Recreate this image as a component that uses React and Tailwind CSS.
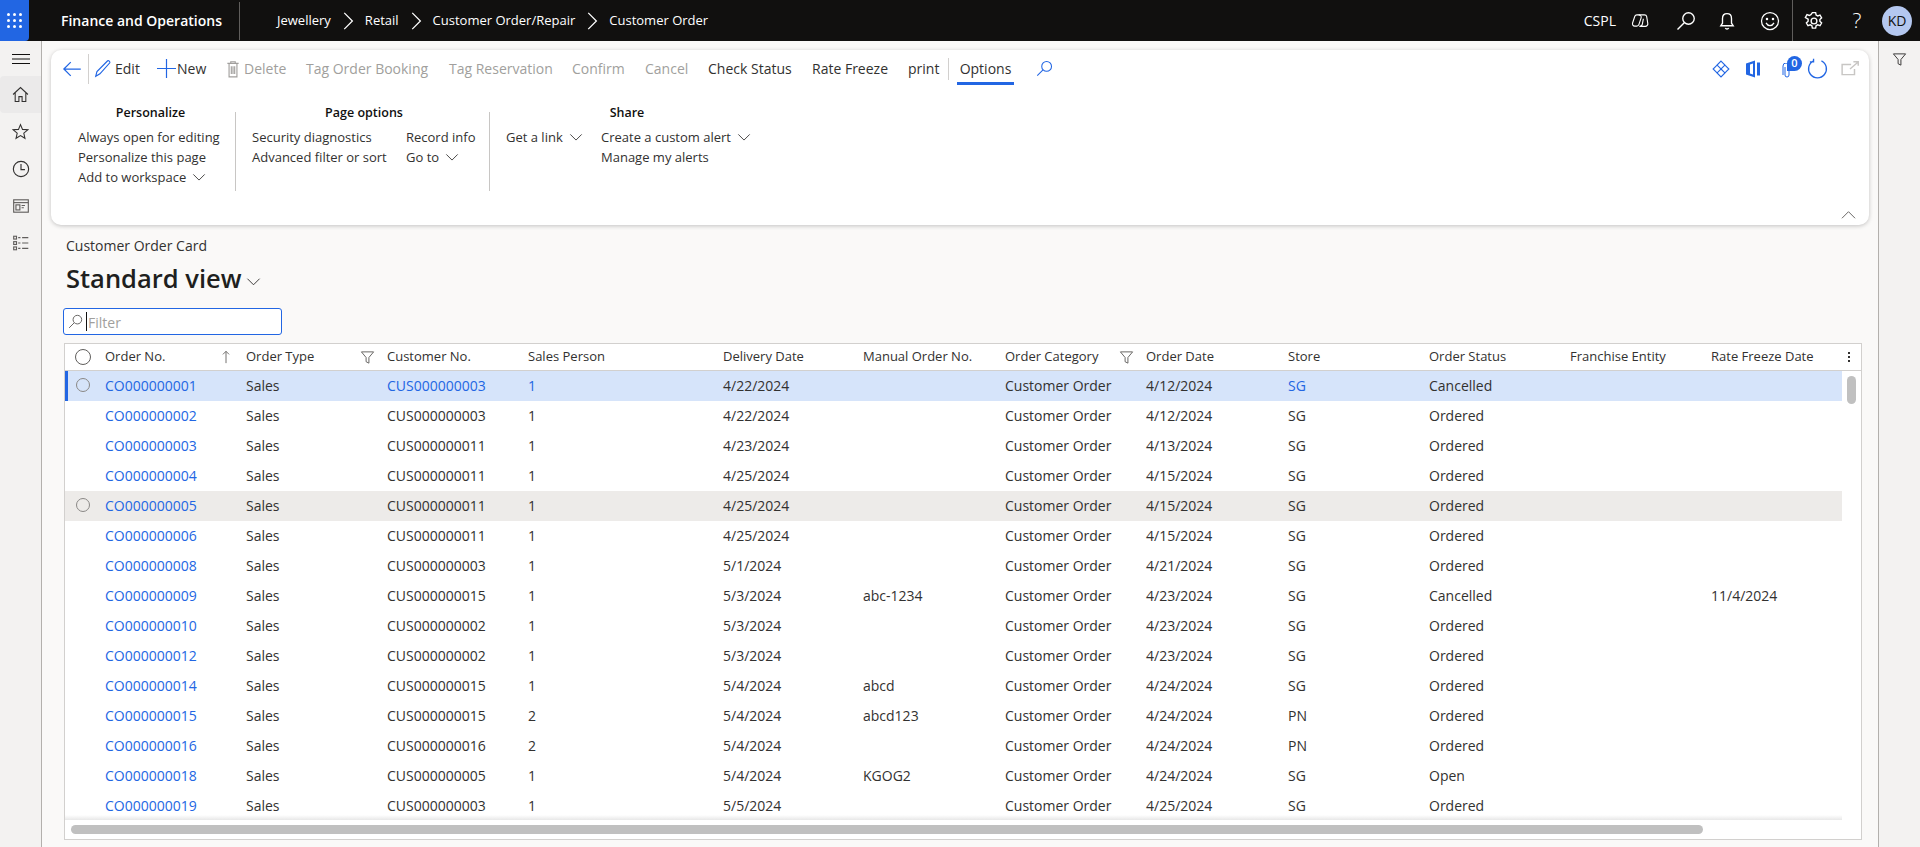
import React from 'react';

const navItems = ['Jewellery', 'Retail', 'Customer Order/Repair', 'Customer Order'];

const actions = [
  { label: 'Tag Order Booking', width: 'w-[143px]', muted: true },
  { label: 'Tag Reservation', width: 'w-[123px]', muted: true },
  { label: 'Confirm', width: 'w-[73px]', muted: true },
  { label: 'Cancel', width: 'w-[63px]', muted: true },
  { label: 'Check Status', width: 'w-[104px]' },
  { label: 'Rate Freeze', width: 'w-[96px]' },
  { label: 'print', width: 'w-[40px]' },
];

const columns = [
  { label: 'Order No.', width: 'w-[141px]', key: 'order' },
  { label: 'Order Type', width: 'w-[141px]', key: 'type' },
  { label: 'Customer No.', width: 'w-[141px]', key: 'customer' },
  { label: 'Sales Person', width: 'w-[195px]', key: 'person' },
  { label: 'Delivery Date', width: 'w-[140px]', key: 'delivery' },
  { label: 'Manual Order No.', width: 'w-[142px]', key: 'manual' },
  { label: 'Order Category', width: 'w-[141px]', key: 'category' },
  { label: 'Order Date', width: 'w-[142px]', key: 'date' },
  { label: 'Store', width: 'w-[141px]', key: 'store' },
  { label: 'Order Status', width: 'w-[141px]', key: 'status' },
  { label: 'Franchise Entity', width: 'w-[141px]', key: 'franchise' },
  { label: 'Rate Freeze Date', width: 'w-[131px]', key: 'freeze' },
];

const row = (order, customer, person, delivery, manual, date, store, status, freeze = '') => ({
  order, type: 'Sales', customer, person, delivery, manual,
  category: 'Customer Order', date, store, status, franchise: '', freeze,
});

const rows = [
  row('CO000000001', 'CUS000000003', '1', '4/22/2024', '', '4/12/2024', 'SG', 'Cancelled'),
  row('CO000000002', 'CUS000000003', '1', '4/22/2024', '', '4/12/2024', 'SG', 'Ordered'),
  row('CO000000003', 'CUS000000011', '1', '4/23/2024', '', '4/13/2024', 'SG', 'Ordered'),
  row('CO000000004', 'CUS000000011', '1', '4/25/2024', '', '4/15/2024', 'SG', 'Ordered'),
  row('CO000000005', 'CUS000000011', '1', '4/25/2024', '', '4/15/2024', 'SG', 'Ordered'),
  row('CO000000006', 'CUS000000011', '1', '4/25/2024', '', '4/15/2024', 'SG', 'Ordered'),
  row('CO000000008', 'CUS000000003', '1', '5/1/2024', '', '4/21/2024', 'SG', 'Ordered'),
  row('CO000000009', 'CUS000000015', '1', '5/3/2024', 'abc-1234', '4/23/2024', 'SG', 'Cancelled', '11/4/2024'),
  row('CO000000010', 'CUS000000002', '1', '5/3/2024', '', '4/23/2024', 'SG', 'Ordered'),
  row('CO000000012', 'CUS000000002', '1', '5/3/2024', '', '4/23/2024', 'SG', 'Ordered'),
  row('CO000000014', 'CUS000000015', '1', '5/4/2024', 'abcd', '4/24/2024', 'SG', 'Ordered'),
  row('CO000000015', 'CUS000000015', '2', '5/4/2024', 'abcd123', '4/24/2024', 'PN', 'Ordered'),
  row('CO000000016', 'CUS000000016', '2', '5/4/2024', '', '4/24/2024', 'PN', 'Ordered'),
  row('CO000000018', 'CUS000000005', '1', '5/4/2024', 'KGOG2', '4/24/2024', 'SG', 'Open'),
  row('CO000000019', 'CUS000000003', '1', '5/5/2024', '', '4/25/2024', 'SG', 'Ordered'),
];

const Icon = ({ size = 16, className = '', children, width = 1 }) => (
  <svg width={size} height={size} viewBox="0 0 16 16" fill="none" stroke="currentColor" strokeWidth={width} className={`shrink-0 ${className}`}>
    {children}
  </svg>
);

const Chevron = ({ className = 'text-[#323130]', size = 14 }) => (
  <Icon size={size} className={className}><path d="M1.500 5l6.500 6.500L14.500 5" /></Icon>
);

const Search = ({ size = 16, className = '', width = 1 }) => (
  <Icon size={size} className={className} width={width}>
    <circle cx="10" cy="6" r="4.600" />
    <path d="M6.600 9.400L1.200 14.800" />
  </Icon>
);

const Funnel = ({ className = 'text-[#605e5c]', size = 15 }) => (
  <Icon size={size} className={className}><path d="M1.500 2h13L9.500 8v6l-3-1.500V8z" /></Icon>
);

const MenuLink = ({ children, chevron }) => (
  <div className="flex h-5 items-center gap-[6px] whitespace-nowrap">
    {children}
    {chevron && <Chevron className="mt-[-3px] text-[#323130]" />}
  </div>
);

const SideButton = ({ children, active }) => (
  <div className={`flex h-[37px] w-full items-center justify-center rounded-l text-[#323130] ${active ? 'bg-[#ebeaea]' : ''}`}>
    {children}
  </div>
);

const TopBar = () => (
  <header className="flex h-[41px] shrink-0 items-center bg-[#11100f] text-white">
    <div className="flex h-full w-[29px] items-center justify-center rounded-br bg-[#2266e3]">
      <div className="grid grid-cols-3 gap-[3px]">
        {Array.from({ length: 9 }).map((_, i) => (
          <span key={i} className="h-[3px] w-[3px] rounded-full bg-white" />
        ))}
      </div>
    </div>
    <div className="ml-[32px] w-[178px] whitespace-nowrap text-[14px] font-semibold">Finance and Operations</div>
    <div className="h-[38px] w-px bg-[#605e5c]" />
    <nav className="ml-[37px] flex items-center text-[13px]">
      {navItems.map((item, i) => (
        <React.Fragment key={item}>
          {i > 0 && (
            <Icon size={20} className="mx-[7px]"><path d="M5 1.500L11.500 8 5 14.500" /></Icon>
          )}
          <span className="whitespace-nowrap">{item}</span>
        </React.Fragment>
      ))}
    </nav>
    <div className="ml-auto flex h-full items-center">
      <span className="mr-[15px] text-[14px]">CSPL</span>
      <Icon size={18} className="mr-[27px]">
        <path d="M6.800 2.500H5.200C4.300 2.500 3.700 3 3.400 3.800L1.400 9.800C1 11.200 1.800 12.500 3.300 12.500H5.200C6 12.500 6.700 12 7 11.200L9 5.200C9.500 3.800 8.300 2.500 6.800 2.500z" />
        <path d="M6.800 2.500H12C13 2.500 13.700 3 13.900 3.900L14.900 10C15.200 11.400 14.200 12.800 12.700 12.800H7.400C8.700 12.800 9.800 12 10.100 10.800L11 6" />
      </Icon>
      <Search size={20} className="mr-[22px]" width={1.100} />
      <Icon size={18} className="mr-[24px]" width={1.200}>
        <path d="M8 1.500c-2.700 0-4 2-4 4.200V10L2.500 12.200h11L12 10V5.700c0-2.200-1.300-4.200-4-4.200z" />
        <path d="M6.500 14.200a1.700 1.700 0 003 0" />
      </Icon>
      <Icon size={20} className="mr-[12px]" width={1}>
        <circle cx="8" cy="8" r="6.800" />
        <circle cx="5.600" cy="6.300" r=".5" fill="currentColor" />
        <circle cx="10.400" cy="6.300" r=".5" fill="currentColor" />
        <path d="M4.800 9.500c.8 1.500 1.900 2.200 3.200 2.200s2.400-.7 3.200-2.200" />
      </Icon>
      <div className="h-full w-px bg-[#605e5c]" />
      <Icon size={20} className="ml-[11px]" width={1.100}>
        <circle cx="8" cy="8" r="2.300" />
        <path d="M6.700 1.300h2.600l.4 1.900 1.300.7 1.800-.7 1.300 2.300-1.400 1.300v1.400l1.400 1.300-1.300 2.300-1.800-.7-1.300.7-.4 1.900H6.700l-.4-1.900-1.300-.7-1.800.7-1.300-2.300 1.400-1.300V6.500L1.100 5.200l1.300-2.300 1.800.7 1.300-.7z" />
      </Icon>
      <span className="ml-[26px] w-[14px] text-center text-[21px] font-light">?</span>
      <div className="ml-[18px] mr-[8px] flex h-[30px] w-[30px] items-center justify-center rounded-full bg-[#b4c7ef] text-[14px] text-[#11100f]">KD</div>
    </div>
  </header>
);

const Sidebar = () => (
  <aside className="flex w-[42px] shrink-0 flex-col items-center border-r border-[#b3b0ad] bg-[#f3f2f1]">
    <div className="flex h-[35px] w-full items-center justify-center text-[#11100f]">
      <svg width="18" height="10" viewBox="0 0 18 10" stroke="currentColor" fill="none"><path d="M0 .5h18M0 5h18M0 9.500h18" /></svg>
    </div>
    <SideButton active>
      <Icon size={17}><path d="M1 8l7-6.500L15 8M3 6.500V14.500h3.500V10h3v4.500H13V6.500" /></Icon>
    </SideButton>
    <SideButton>
      <Icon size={17}><path d="M8 1.500l1.900 4.500 4.900.4-3.700 3.200 1.100 4.800L8 11.900l-4.200 2.500 1.100-4.800L1.200 6.400l4.900-.4z" /></Icon>
    </SideButton>
    <SideButton>
      <Icon size={18}><circle cx="8" cy="8" r="6.800" /><path d="M8 3.500V8.500h3.500" /></Icon>
    </SideButton>
    <SideButton>
      <Icon size={18} className="text-[#605e5c]">
        <rect x="1.500" y="2.500" width="13" height="11" />
        <path d="M1.500 5h13" />
        <rect x="3.500" y="7" width="3.500" height="4.500" />
        <path d="M8.500 7.500h3M8.500 9.500h2" />
      </Icon>
    </SideButton>
    <SideButton>
      <Icon size={18} className="text-[#605e5c]">
        <rect x="1.500" y="2" width="2.500" height="2.500" />
        <rect x="1.500" y="6.800" width="2.500" height="2.500" />
        <rect x="1.500" y="11.500" width="2.500" height="2.500" />
        <path d="M5.500 3.200h2M9 3.200h5.500M5.500 8h2M9 8h5.500M5.500 12.800h2M9 12.800h5.500" />
      </Icon>
    </SideButton>
  </aside>
);

const Ribbon = () => (
  <section className="ml-[-13px] mr-[-7px] mt-[9px] flex h-[175px] shrink-0 flex-col rounded-[10px] bg-white text-[13px] text-[#323130] shadow-[0_1px_4px_rgba(0,0,0,0.22)]">
    <div className="flex h-[36px] items-center pl-[11px] pt-[1px] text-[14px]">
      <Icon size={20} className="text-[#2266e3]"><path d="M15 8H1.500M7 2.500L1.500 8 7 13.500" /></Icon>
      <div className="ml-[6px] mr-[5px] h-[30px] w-px bg-[#d2d0ce]" />
      <Icon size={19} className="text-[#2266e3]"><path d="M1.500 14.500l1-4L11.500 1.500c.8-.6 2.200.7 1.800 1.700L5 12.500z" /></Icon>
      <span className="w-[44px] pl-[2px]">Edit</span>
      <Icon size={19} className="text-[#2266e3]"><path d="M8 0v16M0 8h16" /></Icon>
      <span className="w-[48px] pl-[1px]">New</span>
      <Icon size={18} className="text-[#a19f9d]">
        <path d="M4.500 3v12h7V3M3 3h10M6 3V1.500h4V3M6.500 5.500v7M8 5.500v7M9.500 5.500v7" />
      </Icon>
      <span className="w-[64px] whitespace-nowrap pl-[2px] text-[#a19f9d]">Delete</span>
      {actions.map((a) => (
        <span key={a.label} className={`whitespace-nowrap ${a.width} ${a.muted ? 'text-[#a19f9d]' : ''}`}>{a.label}</span>
      ))}
      <div className="h-[22px] w-px bg-[#d2d0ce]" />
      <div className="relative ml-[8px] flex h-[32px] w-[57px] items-center justify-center font-medium">
        Options
        <div className="absolute bottom-0 left-0 right-0 h-[3px] bg-[#2266e3]" />
      </div>
      <Search size={17} className="ml-[22px] text-[#2266e3]" />
      <div className="ml-auto flex items-center pr-[10px] text-[#2266e3]">
        <Icon size={18}>
          <path d="M8 1l3.500 3.500L8 8 4.500 4.500zM8 8l3.500 3.500L8 15l-3.500-3.500zM4.500 4.500L1 8l3.500 3.500M11.500 4.500L15 8l-3.500 3.500" />
        </Icon>
        <svg width="14" height="18" viewBox="0 0 14 18" className="ml-[16px]" fill="currentColor">
          <path d="M0 3.500L9 0.500v17L0 14.500zM11 2.500h3v13h-3z" />
          <path d="M4 4.500v9l3 1v-11z" fill="#fff" />
        </svg>
        <div className="relative ml-[22px] flex h-[18px] w-[12px] items-center justify-center">
          <Icon size={16} className="mt-[4px]"><path d="M5 4v8a2 2 0 004 0V3a3 3 0 00-6 0v9" /></Icon>
          <span className="absolute left-[5px] top-[-4px] flex h-[15px] w-[15px] items-center justify-center rounded-full rounded-bl-[3px] bg-[#2266e3] text-[11px] font-semibold text-white">0</span>
        </div>
        <Icon size={21} className="ml-[13px]"><path d="M5 2.200a6.800 6.800 0 106 0M5 .500v2.500H2.200" /></Icon>
        <Icon size={18} className="ml-[13px] text-[#c8c6c4]" width={1.300}>
          <path d="M9 4H1v9h11V8M8 8l7-6M11 1.500h4.300v3.500" />
        </Icon>
      </div>
    </div>
    <div className="flex pl-[27px] pt-[17px]">
      <div className="w-[157px] shrink-0">
        <div className="mb-[5px] pr-[12px] text-center text-[12.500px] font-semibold leading-5 text-[#11100f]">Personalize</div>
        <MenuLink>Always open for editing</MenuLink>
        <MenuLink>Personalize this page</MenuLink>
        <MenuLink chevron>Add to workspace</MenuLink>
      </div>
      <div className="mt-[9px] h-[79px] w-px shrink-0 self-start bg-[#c8c6c4]" />
      <div className="grid w-[253px] shrink-0 grid-cols-[154px_1fr] content-start pl-[16px]">
        <div className="col-span-2 mb-[5px] pr-[13px] text-center text-[12.500px] font-semibold leading-5 text-[#11100f]">Page options</div>
        <MenuLink>Security diagnostics</MenuLink>
        <MenuLink>Record info</MenuLink>
        <MenuLink>Advanced filter or sort</MenuLink>
        <MenuLink chevron>Go to</MenuLink>
      </div>
      <div className="mt-[9px] h-[79px] w-px shrink-0 self-start bg-[#c8c6c4]" />
      <div className="grid w-[280px] shrink-0 grid-cols-[95px_1fr] content-start pl-[16px]">
        <div className="col-span-2 mb-[5px] pr-[22px] text-center text-[12.500px] font-semibold leading-5 text-[#11100f]">Share</div>
        <MenuLink chevron>Get a link</MenuLink>
        <MenuLink chevron>Create a custom alert</MenuLink>
        <div />
        <MenuLink>Manage my alerts</MenuLink>
      </div>
    </div>
    <div className="mt-auto flex justify-end pb-[3px] pr-[13px]">
      <Icon size={15} className="text-[#605e5c]"><path d="M1 12l7-7 7 7" /></Icon>
    </div>
  </section>
);

const OrderGrid = () => (
  <div className="relative mt-[8px] border border-[#d2d0ce] bg-white text-[13px] text-[#323130]">
    <div className="flex h-[27px] items-center border-b border-[#d2d0ce] font-medium">
      <div className="flex w-[40px] shrink-0 justify-center">
        <span className="ml-[-5px] h-4 w-4 rounded-full border border-[#605e5c]" />
      </div>
      {columns.map((c) => (
        <div key={c.key} className={`relative flex shrink-0 items-center whitespace-nowrap ${c.width}`}>
          {c.label}
          {c.key === 'order' && (
            <Icon size={14} className="absolute left-[114px] text-[#605e5c]"><path d="M8 15V1.500M4.500 5L8 1.500 11.500 5" /></Icon>
          )}
          {(c.key === 'type' || c.key === 'category') && <Funnel className="absolute left-[114px] text-[#605e5c]" />}
        </div>
      ))}
      <div className="flex flex-1 flex-col items-center gap-[2px] pr-[6px]">
        <span className="h-[2px] w-[2px] bg-[#323130]" />
        <span className="h-[2px] w-[2px] bg-[#323130]" />
        <span className="h-[2px] w-[2px] bg-[#323130]" />
      </div>
    </div>
    <div className="h-[444px] w-[1777px] overflow-hidden text-[14px]">
      {rows.map((r, i) => (
        <div
          key={r.order}
          className={`flex h-[30px] items-center pb-[2px] ${i === 0 ? 'border-l-[3px] border-[#2266e3] bg-[#d6e4fa]' : i === 4 ? 'border-l-[3px] border-[#edebe9] bg-[#edebe9]' : 'border-l-[3px] border-transparent'}`}
        >
          <div className="flex w-[37px] shrink-0 justify-center">
            {(i === 0 || i === 4) && <span className="ml-[-7px] h-[14px] w-[14px] rounded-full border border-[#8a8886]" />}
          </div>
          {columns.map((c) => {
            const link = c.key === 'order' || (i === 0 && (c.key === 'customer' || c.key === 'person' || c.key === 'store'));
            return (
              <div key={c.key} className={`shrink-0 whitespace-nowrap ${c.width} ${link ? 'text-[#2266e3]' : ''}`}>
                {r[c.key]}
              </div>
            );
          })}
        </div>
      ))}
    </div>
    <div className="h-[5px] w-[1777px] bg-gradient-to-b from-transparent to-[#e8e8e8]" />
    <div className="flex h-[19px] items-start pl-[6px] pt-[5px]">
      <div className="h-[9px] w-[1632px] rounded-full bg-[#c0c0c0]" />
    </div>
    <div className="absolute left-[1782px] top-[32px] h-[28px] w-[9px] rounded-full bg-[#c0c0c0]" />
  </div>
);

const App = () => (
  <div className="flex h-[847px] w-[1920px] flex-col overflow-hidden bg-[#faf9f8] font-['Open_Sans',sans-serif]">
    <TopBar />
    <div className="flex min-h-0 flex-1">
      <Sidebar />
      <main className="min-w-0 flex-1 pl-[22px] pr-[16px]">
        <Ribbon />
        <div className="ml-[2px] mt-[11px] text-[14px] leading-5 text-[#323130]">Customer Order Card</div>
        <div className="ml-[2px] mt-[5px] flex h-[36px] items-center">
          <h1 className="text-[25.500px] font-semibold leading-none text-[#201f1e]">Standard view</h1>
          <Chevron className="ml-[4px] mt-[4px] text-[#323130]" size={15} />
        </div>
        <div className="ml-[-1px] mt-[11px] flex h-[27px] w-[219px] items-center rounded-[3px] border border-[#2266e3] bg-white pl-[4px] text-[14px]">
          <Search size={15} className="text-[#605e5c]" />
          <span className="ml-[3px] h-[19px] w-px bg-[#11100f]" />
          <span className="ml-[1px] mt-[2px] text-[#a19f9d]">Filter</span>
        </div>
        <OrderGrid />
      </main>
      <aside className="flex w-[42px] shrink-0 justify-center border-l border-[#b3b0ad] bg-[#f3f2f1] pt-[11px]">
        <Funnel className="text-[#323130]" />
      </aside>
    </div>
  </div>
);

export default App;
